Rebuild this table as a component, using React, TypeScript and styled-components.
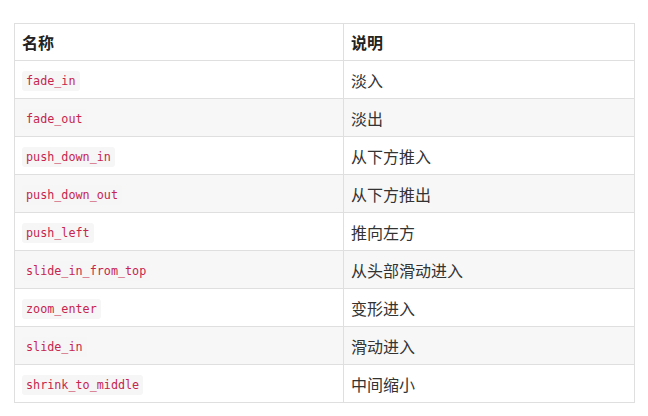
import React from "react";
import styled, { createGlobalStyle } from "styled-components";

const Global = createGlobalStyle`
  html, body { margin: 0; padding: 0; background: #fff; }
  body { font-family: "Noto Sans CJK SC", "Noto Sans", sans-serif; }
`;

const Page = styled.div`
  padding: 23px 14px 0 14px;
`;

const Table = styled.table`
  border-collapse: collapse;
  width: 620px;
  font-size: 16px;
  color: #333;
  table-layout: fixed;
`;

const Th = styled.th`
  border: 1px solid #dfdfdf;
  text-align: left;
  font-weight: 700;
  height: 36px;
  padding: 0 8px 0 7px;
  color: #222;
  line-height: 20px;
`;

const Row = styled.tr<{ $alt: boolean }>`
  background: ${(p) => (p.$alt ? "#f7f7f7" : "#fff")};
`;

const Td = styled.td`
  border: 1px solid #dfdfdf;
  height: 38px;
  padding: 0 8px 0 7px;
  line-height: 20px;
  box-sizing: border-box;
`;

const Code = styled.code`
  display: inline-block;
  font-family: "DejaVu Sans Mono", "Liberation Mono", monospace;
  font-size: 11.75px;
  line-height: 20px;
  color: #c7254e;
  background: #f6f6f6;
  border-radius: 3px;
  padding: 0 4px;
  vertical-align: middle;
`;

const rows: [string, string][] = [
  ["fade_in", "淡入"],
  ["fade_out", "淡出"],
  ["push_down_in", "从下方推入"],
  ["push_down_out", "从下方推出"],
  ["push_left", "推向左方"],
  ["slide_in_from_top", "从头部滑动进入"],
  ["zoom_enter", "变形进入"],
  ["slide_in", "滑动进入"],
  ["shrink_to_middle", "中间缩小"],
];

export default function App() {
  return (
    <>
      <Global />
      <Page>
        <Table>
          <colgroup>
            <col style={{ width: 329 }} />
            <col style={{ width: 291 }} />
          </colgroup>
          <thead>
            <tr>
              <Th>名称</Th>
              <Th>说明</Th>
            </tr>
          </thead>
          <tbody>
            {rows.map(([k, v], i) => (
              <Row key={k} $alt={i % 2 === 1}>
                <Td>
                  <Code>{k}</Code>
                </Td>
                <Td>{v}</Td>
              </Row>
            ))}
          </tbody>
        </Table>
      </Page>
    </>
  );
}
